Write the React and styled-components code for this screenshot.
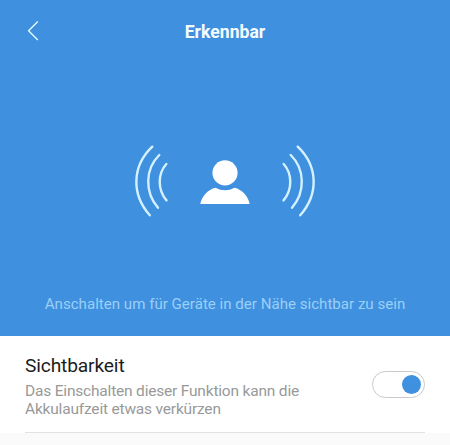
import React, { useState } from "react";
import styled, { createGlobalStyle } from "styled-components";

const GlobalStyle = createGlobalStyle`
  * { box-sizing: border-box; }
  body {
    margin: 0;
    background: #fafafa;
    font-family: Roboto, "Liberation Sans", sans-serif;
  }
`;

const Screen = styled.main`
  width: 450px;
  height: 445px;
  display: flex;
  flex-direction: column;
  overflow: hidden;
  background: #fafafa;
`;

const Hero = styled.section`
  height: 336px;
  flex: none;
  display: flex;
  flex-direction: column;
  background: #4090e0;
`;

const Header = styled.header`
  height: 62px;
  display: grid;
  grid-template-columns: 60px 1fr 60px;
  align-items: center;
`;

const BackButton = styled.button`
  display: flex;
  margin: 0 0 0 26px;
  padding: 0;
  width: 16px;
  border: 0;
  background: none;
  color: #e2fbff;
`;

const Title = styled.h1`
  margin: 1px 0 0;
  text-align: center;
  font-size: 17.6px;
  line-height: 22px;
  font-weight: 700;
  color: #f4fdff;
  white-space: nowrap;
`;

const Illustration = styled.div`
  display: flex;
  justify-content: center;
  margin-top: 78px;
`;

const Hint = styled.p`
  margin: 78px 0 0;
  text-align: center;
  font-size: 15.1px;
  line-height: 20px;
  color: #9acff6;
  white-space: nowrap;
`;

const Panel = styled.section`
  height: 97px;
  flex: none;
  padding: 0 25px;
  background: #fff;
`;

const SettingRow = styled.div`
  height: 97px;
  display: flex;
  justify-content: space-between;
  border-bottom: 1px solid #e2e2e2;
`;

const SettingText = styled.div`
  padding-top: 19px;
`;

const SettingName = styled.h2`
  margin: 0 0 6px;
  font-size: 19.2px;
  letter-spacing: -0.15px;
  line-height: 22px;
  font-weight: 400;
  color: #1c1c1c;
`;

const SettingInfo = styled.p`
  margin: 0;
  font-size: 15.5px;
  letter-spacing: -0.19px;
  line-height: 17.5px;
  color: #999;
  white-space: nowrap;
`;

const Switch = styled.button`
  align-self: center;
  width: 53px;
  height: 27px;
  display: flex;
  align-items: center;
  justify-content: ${(p) => (p.$on ? "flex-end" : "flex-start")};
  padding: 0 3px;
  border: 1px solid #c9c9c9;
  border-radius: 14px;
  background: #fff;
`;

const Knob = styled.span`
  width: 19px;
  height: 19px;
  border-radius: 50%;
  background: ${(p) => (p.$on ? "#4090e0" : "#c9c9c9")};
`;

const BackIcon = () => (
  <svg width="16" height="22" viewBox="26 20 16 22" fill="none" stroke="currentColor" strokeWidth="1.4">
    <path d="M37.8 21.6 L28.6 30.8 L37.8 40" />
  </svg>
);

const PersonSignal = () => (
  <svg width="184" height="76" viewBox="133 140 184 76" overflow="visible" fill="none">
    <g stroke="#d3f1ff" strokeWidth="2.4" strokeLinecap="round">
      <path d="M152.3 146.7 C132 166 131 194 149.8 215.3" />
      <path d="M159.3 155 C145 169 144.5 192 158 207.8" />
      <path d="M166.3 164 C157.5 174 157.5 190 166.5 200.4" />
      <path d="M297.7 146.7 C318 166 319 194 300.2 215.3" />
      <path d="M290.7 155 C305 169 305.5 192 292 207.8" />
      <path d="M283.7 164 C292.5 174 292.5 190 283.5 200.4" />
    </g>
    <g fill="#fff">
      <circle cx="225" cy="172.8" r="12.6" />
      <path d="M200.3 204 C202 196 208 189.5 215.5 187.8 Q220 190.3 225 190.3 Q230 190.3 234.5 187.8 C242 189.5 248 196 249.7 204 Z" />
    </g>
  </svg>
);

export default function App() {
  const [visible, setVisible] = useState(true);
  return (
    <Screen>
      <GlobalStyle />
      <Hero>
        <Header>
          <BackButton aria-label="Zurück">
            <BackIcon />
          </BackButton>
          <Title>Erkennbar</Title>
        </Header>
        <Illustration>
          <PersonSignal />
        </Illustration>
        <Hint>Anschalten um für Geräte in der Nähe sichtbar zu sein</Hint>
      </Hero>
      <Panel>
        <SettingRow>
          <SettingText>
            <SettingName>Sichtbarkeit</SettingName>
            <SettingInfo>
              Das Einschalten dieser Funktion kann die
              <br />
              Akkulaufzeit etwas verkürzen
            </SettingInfo>
          </SettingText>
          <Switch
            role="switch"
            aria-checked={visible}
            aria-label="Sichtbarkeit"
            $on={visible}
            onClick={() => setVisible(!visible)}
          >
            <Knob $on={visible} />
          </Switch>
        </SettingRow>
      </Panel>
    </Screen>
  );
}
